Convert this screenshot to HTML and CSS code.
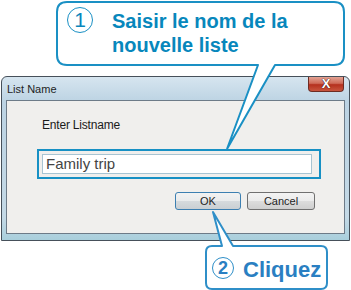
FILE: index.html
```html
<!DOCTYPE html>
<html>
<head>
<meta charset="utf-8">
<link rel="stylesheet" href="styles.css">
</head>
<body>
<div class="page">
  <div class="window">
    <div class="titlebar">
      <span class="title">List Name</span>
      <span class="close">X</span>
    </div>
    <div class="client">
      <div class="label">Enter Listname</div>
      <div class="highlight">
        <div class="input">Family trip</div>
      </div>
      <div class="buttons">
        <span class="btn btn-default">OK</span>
        <span class="btn">Cancel</span>
      </div>
    </div>
  </div>

  <svg class="bubbles" width="351" height="290" viewBox="0 0 351 290">
    <path class="bubble1" d="M67,2 H334 Q344,2 344,12 V55 Q344,65 334,65 H275 L227,149 L258,65 H67 Q57,65 57,55 V12 Q57,2 67,2 Z"/>
    <path class="bubble2" d="M212,246 H222 L213,212 L233,246 H321 Q327,246 327,252 V283 Q327,289 321,289 H212 Q206,289 206,283 V252 Q206,246 212,246 Z"/>
  </svg>

  <div class="callout1">
    <span class="num num1">1</span>
    <div class="ctext1">Saisir le nom de la<br>nouvelle liste</div>
  </div>
  <div class="callout2">
    <span class="num num2">2</span>
    <div class="ctext2">Cliquez</div>
  </div>
</div>
</body>
</html>
```
FILE: styles.css
```css
html, body {
  margin: 0;
  padding: 0;
  background: #ffffff;
}
.page {
  position: relative;
  width: 351px;
  height: 290px;
  padding: 76px 0 0 1px;
  box-sizing: border-box;
  overflow: hidden;
  font-family: "Liberation Sans", Arial, sans-serif;
}
.window {
  width: 349px;
  height: 165px;
  box-sizing: border-box;
  border: 1px solid #46505a;
  border-radius: 6px 6px 0 0;
  background: linear-gradient(#d6e5ef, #bcd3e3 25px, #c4d9e6 140px, #a9cfdc);
  display: flex;
  flex-direction: column;
}
.titlebar {
  height: 23px;
  display: flex;
  align-items: flex-start;
  justify-content: space-between;
  padding: 0 5px 0 5px;
}
.title {
  font-size: 11px;
  color: #1e1e1e;
  line-height: 14px;
  margin-top: 5px;
}
.close {
  width: 36px;
  height: 15px;
  box-sizing: border-box;
  border: 1px solid #6e2c22;
  border-top: none;
  border-radius: 0 0 4px 4px;
  background: linear-gradient(#e3a394, #cf6a58 45%, #b5301e 55%, #c8553e);
  color: #ffffff;
  font-weight: bold;
  font-size: 13px;
  line-height: 14px;
  text-align: center;
  text-shadow: 0 0 1px #3b1010, 0 0 1px #3b1010;
}
.client {
  margin: 0 4px;
  height: 134px;
  box-sizing: border-box;
  border: 1px solid #6d7b88;
  background: #f0efed;
  padding: 17px 29px 0 30px;
  display: flex;
  flex-direction: column;
}
.label {
  font-size: 12px;
  line-height: 14px;
  color: #1a1a1a;
  margin-left: 5px;
  letter-spacing: -0.2px;
}
.highlight {
  margin-top: 17px;
  width: 284px;
  height: 30px;
  box-sizing: border-box;
  border: 2px solid #1790c4;
  padding: 3px 7px 3px 3px;
}
.input {
  height: 20px;
  box-sizing: border-box;
  border: 1px solid #a8c4d2;
  background: #ffffff;
  font-size: 15px;
  line-height: 18px;
  color: #444444;
  padding-left: 3px;
}
.buttons {
  margin-top: 13px;
  display: flex;
  justify-content: flex-end;
  gap: 6px;
}
.btn {
  width: 68px;
  height: 18px;
  box-sizing: border-box;
  border: 1px solid #707070;
  border-radius: 3px;
  background: linear-gradient(#f3f3f3, #ebebeb 50%, #dddddd 51%, #cfcfcf);
  font-size: 11px;
  line-height: 16px;
  text-align: center;
  color: #1e1e1e;
}
.btn-default {
  width: 66px;
  border-color: #3c7fb1;
  background: linear-gradient(#f2f2f2, #e9ebec 50%, #d6dadd 51%, #c9cfd3);
}
.bubbles {
  position: absolute;
  left: 0;
  top: 0;
}
.bubble1 {
  fill: #ffffff;
  stroke: #1a90c4;
  stroke-width: 2;
  stroke-linejoin: round;
}
.bubble2 {
  fill: #ffffff;
  stroke: #2f8fc8;
  stroke-width: 2;
  stroke-linejoin: round;
}
.callout1 {
  position: absolute;
  left: 67px;
  top: 7px;
  display: flex;
  align-items: flex-start;
  gap: 19px;
}
.num {
  box-sizing: border-box;
  border-radius: 50%;
  display: flex;
  align-items: center;
  justify-content: center;
  font-family: "Liberation Sans", Arial, sans-serif;
  font-weight: bold;
}
.num1 {
  width: 26px;
  height: 26px;
  border: 1.5px solid #1a90c4;
  color: #0a86bb;
  font-size: 21px;
  font-weight: normal;
}
.ctext1 {
  margin-top: 2px;
  font-size: 20px;
  line-height: 24px;
  font-weight: bold;
  color: #0787bc;
}
.callout2 {
  position: absolute;
  left: 212px;
  top: 257px;
  display: flex;
  align-items: flex-start;
  gap: 9px;
}
.num2 {
  width: 22px;
  height: 22px;
  border: 1.5px solid #2f8fc8;
  color: #2a7fc2;
  font-size: 18px;
}
.ctext2 {
  margin-top: 2px;
  font-size: 22px;
  line-height: 22px;
  font-weight: bold;
  color: #2a7fc2;
}
```
